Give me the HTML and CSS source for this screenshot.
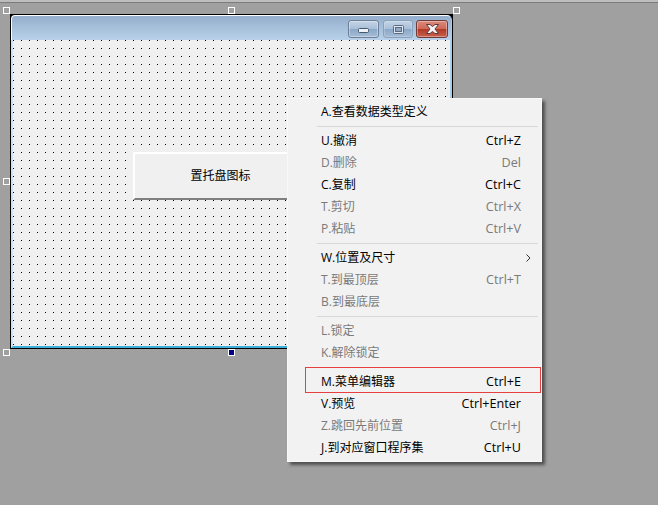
FILE: index.html
```
<!DOCTYPE html>
<html lang="zh-CN">
<head>
<meta charset="utf-8">
<title>窗口设计器</title>
<link rel="stylesheet" href="styles.css">
</head>
<body>
<div class="canvas">
  <div class="topbar"></div>
  <div class="form">
    <div class="titlebar">
      <div class="caption-btn caption-btn-min">
        <svg class="glyph-min" width="11" height="5" viewBox="0 0 11 5"><rect x="0.5" y="0.5" width="10" height="4" rx="1" fill="#eef2f6" stroke="#46586e"/></svg>
      </div>
      <div class="caption-btn caption-btn-dim">
        <svg width="11" height="9" viewBox="0 0 11 9"><rect x="0.5" y="0.5" width="10" height="8" rx="1" fill="#dfe7f0" stroke="#5a6b80"/><rect x="2.5" y="2.500" width="6" height="4" fill="#8fa8c4" stroke="#5a6b80"/></svg>
      </div>
      <div class="caption-btn caption-btn-close">
        <svg width="13" height="10" viewBox="0 0 13 10"><path d="M0.500 0.500h3.500l2.500 2 2.500-2h3.500l-3.500 4.500 3.500 4.500h-3.500l-2.500-2-2.500 2h-3.500l3.500-4.500z" fill="#f4f4f6" stroke="#5c3a3a" stroke-width="1"/></svg>
      </div>
    </div>
    <div class="client">
      <div class="push-btn">置托盘图标</div>
    </div>
  </div>
  <span class="handle handle-tl"></span>
  <span class="handle handle-tm"></span>
  <span class="handle handle-tr"></span>
  <span class="handle handle-ml"></span>
  <span class="handle handle-bl"></span>
  <span class="handle handle-bm"></span>
  <div class="menu">
    <div class="item"><span>A.查看数据类型定义</span></div>
    <div class="sep"></div>
    <div class="item"><span>U.撤消</span><span class="key">Ctrl+Z</span></div>
    <div class="item off"><span>D.删除</span><span class="key">Del</span></div>
    <div class="item"><span>C.复制</span><span class="key">Ctrl+C</span></div>
    <div class="item off"><span>T.剪切</span><span class="key">Ctrl+X</span></div>
    <div class="item off"><span>P.粘贴</span><span class="key">Ctrl+V</span></div>
    <div class="sep"></div>
    <div class="item sub"><span>W.位置及尺寸</span>
      <svg class="arrow" width="5" height="8" viewBox="0 0 5 8"><path d="M0.500 0.500L4 4L0.500 7.500" fill="none" stroke="#333" stroke-width="1"/></svg>
    </div>
    <div class="item off"><span>T.到最顶层</span><span class="key">Ctrl+T</span></div>
    <div class="item off"><span>B.到最底层</span></div>
    <div class="sep"></div>
    <div class="item off"><span>L.锁定</span></div>
    <div class="item off"><span>K.解除锁定</span></div>
    <div class="sep"></div>
    <div class="item marked"><span>M.菜单编辑器</span><span class="key">Ctrl+E</span></div>
    <div class="item"><span>V.预览</span><span class="key">Ctrl+Enter</span></div>
    <div class="item off"><span>Z.跳回先前位置</span><span class="key">Ctrl+J</span></div>
    <div class="item"><span>J.到对应窗口程序集</span><span class="key">Ctrl+U</span></div>
  </div>
</div>
</body>
</html>
```
FILE: styles.css
```
html, body {
  margin: 0;
  padding: 0;
  background: #a0a0a0;
}

.canvas {
  position: relative;
  width: 658px;
  height: 505px;
  overflow: hidden;
  background: #a0a0a0;
  font-family: "Open Sans", "Noto Sans CJK SC", sans-serif;
}

.topbar {
  height: 2px;
  background: #bdbdbd;
  border-bottom: 1px solid #7c7c7c;
}

.form {
  position: absolute;
  left: 10px;
  top: 14px;
  width: 443px;
  height: 335px;
  box-sizing: border-box;
  display: flex;
  flex-direction: column;
  background: #000;
  padding: 1px 1px 1px 1px;
}

.titlebar {
  flex: none;
  height: 25px;
  box-sizing: border-box;
  display: flex;
  justify-content: flex-end;
  align-items: flex-start;
  gap: 3px;
  padding: 4px 3px 0 0;
  background: linear-gradient(#94aecb, #b9d1ea);
  border-top: 1px solid #fff;
  border-left: 1px solid #fff;
  border-right: 1px solid #a9cdea;
  border-top-left-radius: 4px;
  border-top-right-radius: 5px;
}

.caption-btn {
  width: 31px;
  height: 18px;
  box-sizing: border-box;
  display: flex;
  align-items: center;
  justify-content: center;
  border: 1px solid #6c7f97;
  border-radius: 3px;
  background: linear-gradient(#c3d4e6 0, #a9c0d9 48%, #8ba8c8 52%, #a5bcd6 100%);
  box-shadow: inset 0 0 0 1px rgba(255,255,255,.35);
}

.caption-btn-min {
  margin-right: 1px;
}

.glyph-min {
  margin-top: 3px;
}

.caption-btn-dim {
  width: 30px;
  border-color: #8ba1b9;
  box-shadow: inset 0 0 0 1px rgba(255,255,255,.2);
}

.caption-btn-close {
  width: 32px;
  border-color: #6e3b3b;
  background: linear-gradient(#dc8a7c 0, #cf6a58 48%, #b03a26 52%, #c8604c 100%);
}

.client {
  flex: 1;
  position: relative;
  background-color: #f0f0f0;
  background-image:
    linear-gradient(to right, transparent 1px, #f0f0f0 1px),
    linear-gradient(to bottom, #000 1px, #f0f0f0 1px);
  background-size: 8px 8px;
  background-position: 0 0;
  border-left: 2px solid #cfe2f3;
  border-right: 2px solid #a9cdea;
  border-bottom: 2px solid #3fb0dc;
}

.push-btn {
  position: absolute;
  left: 120px;
  top: 112px;
  width: 175px;
  height: 48px;
  box-sizing: border-box;
  display: flex;
  align-items: center;
  justify-content: center;
  padding-bottom: 4px;
  background: #f0f0f0;
  border-top: 2px solid #fff;
  border-left: 2px solid #fff;
  border-right: 2px solid #c8c8c8;
  border-bottom: 2px solid #7f7f7f;
  font-family: "Noto Sans CJK SC", sans-serif;
  font-size: 12px;
  color: #000;
}

.handle {
  position: absolute;
  width: 7px;
  height: 7px;
  box-sizing: border-box;
  border: 1px solid #fff;
}

.handle-tl { left: 3px; top: 7px; }
.handle-tm { left: 228px; top: 7px; }
.handle-tr { left: 453px; top: 7px; }
.handle-ml { left: 3px; top: 178px; }
.handle-bl { left: 3px; top: 349px; }
.handle-bm { left: 228px; top: 349px; background: #000080; }

.menu {
  position: absolute;
  left: 287px;
  top: 98px;
  width: 255px;
  box-sizing: border-box;
  padding: 2px 0;
  background: #f2f2f2;
  border: 1px solid #f8f8f8;
  box-shadow: 3px 3px 3px rgba(0,0,0,.5);
  font-size: 12px;
  color: #000;
}

.item {
  position: relative;
  height: 22px;
  box-sizing: border-box;
  display: flex;
  align-items: center;
  justify-content: space-between;
  padding: 0 20px 2px 33px;
  white-space: nowrap;
}

.key {
  font-size: 12.600px;
}

.off { color: #7a7a7a; }

.arrow {
  position: absolute;
  left: 238px;
  top: 7px;
}

.sep {
  height: 1px;
  margin: 3px 3px 3px 29px;
  background: #d8d8d8;
}

.marked::before {
  content: "";
  position: absolute;
  left: 17px;
  right: 0;
  top: -4px;
  height: 26px;
  box-sizing: border-box;
  border: 1px solid #e64040;
}
```
